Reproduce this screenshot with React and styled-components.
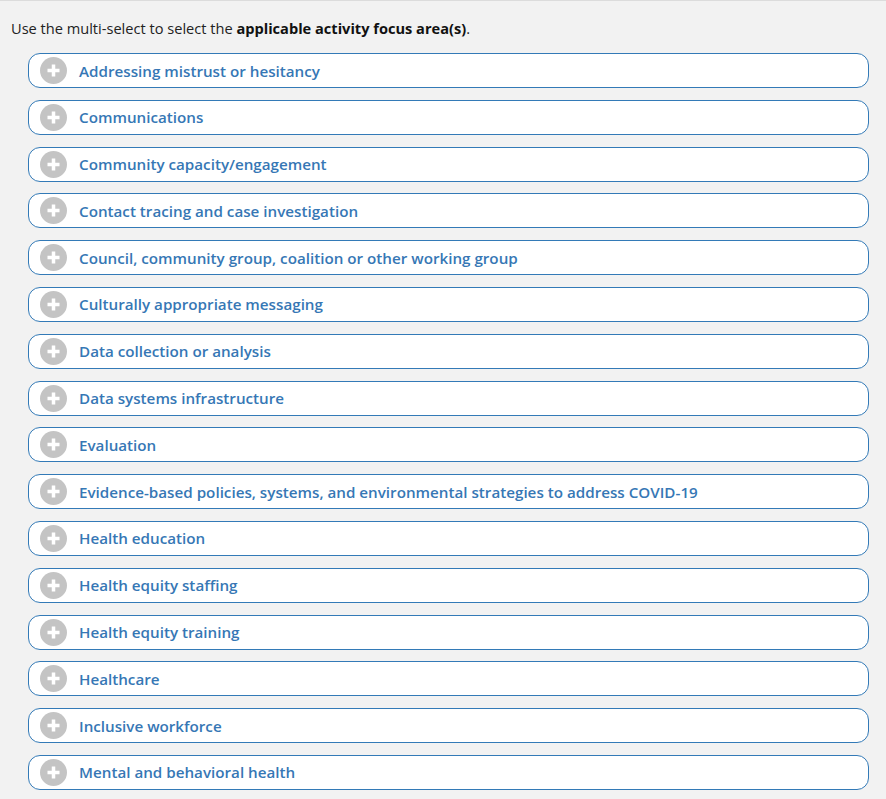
import React from 'react';
import styled, { createGlobalStyle } from 'styled-components';

const GlobalStyle = createGlobalStyle`
  html, body {
    margin: 0;
    padding: 0;
    background: #f2f2f2;
  }
  body {
    font-family: "Open Sans", "Liberation Sans", sans-serif;
  }
`;

const Page = styled.div`
  border-top: 1px solid #dcdcdc;
  padding: 17px 11px 10px 11px;
  min-height: 799px;
  box-sizing: border-box;
`;

const Intro = styled.p`
  margin: 0 0 15px 0;
  font-size: 14.6px;
  line-height: 20px;
  color: #222;

  strong {
    font-weight: 700;
    color: #111;
  }
`;

const List = styled.div`
  display: flex;
  flex-direction: column;
  gap: 11.8px;
  padding-left: 17px;
  padding-right: 6px;
`;

const Item = styled.button`
  display: flex;
  align-items: center;
  gap: 12px;
  height: 35px;
  box-sizing: border-box;
  padding: 0 0 0 11px;
  background: #fff;
  border: 1px solid #337ab7;
  border-radius: 12px;
  cursor: pointer;
  text-align: left;
  font-family: inherit;
`;

const Plus = styled.span`
  width: 27px;
  height: 27px;
  border-radius: 50%;
  background: #c4c4c4;
  display: flex;
  align-items: center;
  justify-content: center;
  flex-shrink: 0;
`;

const Label = styled.span`
  font-size: 15.2px;
  font-weight: 600;
  color: #3677b5;
`;

const areas = [
  'Addressing mistrust or hesitancy',
  'Communications',
  'Community capacity/engagement',
  'Contact tracing and case investigation',
  'Council, community group, coalition or other working group',
  'Culturally appropriate messaging',
  'Data collection or analysis',
  'Data systems infrastructure',
  'Evaluation',
  'Evidence-based policies, systems, and environmental strategies to address COVID-19',
  'Health education',
  'Health equity staffing',
  'Health equity training',
  'Healthcare',
  'Inclusive workforce',
  'Mental and behavioral health',
];

function PlusIcon() {
  return (
    <Plus>
      <svg width="13" height="13" viewBox="0 0 13 13">
        <path d="M6.5 0.5v12M0.5 6.5h12" stroke="#fff" strokeWidth="3.5" />
      </svg>
    </Plus>
  );
}

export default function App() {
  return (
    <Page>
      <GlobalStyle />
      <Intro>
        Use the multi-select to select the <strong>applicable activity focus area(s)</strong>.
      </Intro>
      <List>
        {areas.map((area) => (
          <Item key={area} type="button">
            <PlusIcon />
            <Label>{area}</Label>
          </Item>
        ))}
      </List>
    </Page>
  );
}
